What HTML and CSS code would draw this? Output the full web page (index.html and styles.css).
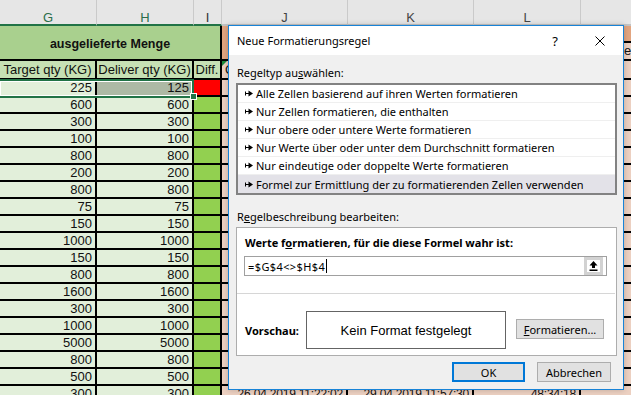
FILE: index.html
```html
<!DOCTYPE html>
<html lang="de">
<head>
    <meta charset="UTF-8">
    <title>Neue Formatierungsregel</title>
    <link rel="stylesheet" href="styles.css">
</head>
<body>
    <div class="sheet">
        <div class="heads">
            <div class="head col-g sel">G</div>
            <div class="head col-h sel">H</div>
            <div class="head col-i sel dark">I</div>
            <div class="head col-j">J</div>
            <div class="head col-k">K</div>
            <div class="head col-l">L</div>
            <div class="head col-m"></div>
        </div>

        <!-- merged group header -->
        <div class="row r1">
            <div class="cell group-head">ausgelieferte Menge</div>
            <div class="cell col-j peach"></div>
            <div class="cell col-k peach"></div>
            <div class="cell col-l peach"></div>
            <div class="split col-m">
                <div class="cell peach"></div>
                <div class="cell pink left">erledigt</div>
            </div>
        </div>

        <div class="row r2">
            <div class="cell col-g sub">Target qty (KG)</div>
            <div class="cell col-h sub">Deliver qty (KG)</div>
            <div class="cell col-i sub">Diff.</div>
            <div class="cell col-j pink left flag">O</div>
            <div class="cell col-k pink"></div>
            <div class="cell col-l pink"></div>
            <div class="cell col-m pink"></div>
        </div>

        <div class="row"><div class="cell col-g active">225</div><div class="cell col-h picked">125</div><div class="cell col-i bad"></div><div class="cell col-j"></div><div class="cell col-k"></div><div class="cell col-l"></div><div class="cell col-m"></div></div>
        <div class="row"><div class="cell col-g">600</div><div class="cell col-h">600</div><div class="cell col-i ok"></div><div class="cell col-j"></div><div class="cell col-k"></div><div class="cell col-l"></div><div class="cell col-m"></div></div>
        <div class="row"><div class="cell col-g">300</div><div class="cell col-h">300</div><div class="cell col-i ok"></div><div class="cell col-j"></div><div class="cell col-k"></div><div class="cell col-l"></div><div class="cell col-m"></div></div>
        <div class="row"><div class="cell col-g">100</div><div class="cell col-h">100</div><div class="cell col-i ok"></div><div class="cell col-j"></div><div class="cell col-k"></div><div class="cell col-l"></div><div class="cell col-m"></div></div>
        <div class="row"><div class="cell col-g">800</div><div class="cell col-h">800</div><div class="cell col-i ok"></div><div class="cell col-j"></div><div class="cell col-k"></div><div class="cell col-l"></div><div class="cell col-m"></div></div>
        <div class="row"><div class="cell col-g">200</div><div class="cell col-h">200</div><div class="cell col-i ok"></div><div class="cell col-j"></div><div class="cell col-k"></div><div class="cell col-l"></div><div class="cell col-m"></div></div>
        <div class="row"><div class="cell col-g">800</div><div class="cell col-h">800</div><div class="cell col-i ok"></div><div class="cell col-j"></div><div class="cell col-k"></div><div class="cell col-l"></div><div class="cell col-m"></div></div>
        <div class="row"><div class="cell col-g">75</div><div class="cell col-h">75</div><div class="cell col-i ok"></div><div class="cell col-j"></div><div class="cell col-k"></div><div class="cell col-l"></div><div class="cell col-m"></div></div>
        <div class="row"><div class="cell col-g">150</div><div class="cell col-h">150</div><div class="cell col-i ok"></div><div class="cell col-j"></div><div class="cell col-k"></div><div class="cell col-l"></div><div class="cell col-m"></div></div>
        <div class="row"><div class="cell col-g">1000</div><div class="cell col-h">1000</div><div class="cell col-i ok"></div><div class="cell col-j"></div><div class="cell col-k"></div><div class="cell col-l"></div><div class="cell col-m"></div></div>
        <div class="row"><div class="cell col-g">150</div><div class="cell col-h">150</div><div class="cell col-i ok"></div><div class="cell col-j"></div><div class="cell col-k"></div><div class="cell col-l"></div><div class="cell col-m"></div></div>
        <div class="row"><div class="cell col-g">800</div><div class="cell col-h">800</div><div class="cell col-i ok"></div><div class="cell col-j"></div><div class="cell col-k"></div><div class="cell col-l"></div><div class="cell col-m"></div></div>
        <div class="row"><div class="cell col-g">1600</div><div class="cell col-h">1600</div><div class="cell col-i ok"></div><div class="cell col-j"></div><div class="cell col-k"></div><div class="cell col-l"></div><div class="cell col-m"></div></div>
        <div class="row"><div class="cell col-g">300</div><div class="cell col-h">300</div><div class="cell col-i ok"></div><div class="cell col-j"></div><div class="cell col-k"></div><div class="cell col-l"></div><div class="cell col-m"></div></div>
        <div class="row"><div class="cell col-g">1000</div><div class="cell col-h">1000</div><div class="cell col-i ok"></div><div class="cell col-j"></div><div class="cell col-k"></div><div class="cell col-l"></div><div class="cell col-m"></div></div>
        <div class="row"><div class="cell col-g">5000</div><div class="cell col-h">5000</div><div class="cell col-i ok"></div><div class="cell col-j"></div><div class="cell col-k"></div><div class="cell col-l"></div><div class="cell col-m"></div></div>
        <div class="row"><div class="cell col-g">800</div><div class="cell col-h">800</div><div class="cell col-i ok"></div><div class="cell col-j"></div><div class="cell col-k"></div><div class="cell col-l"></div><div class="cell col-m"></div></div>
        <div class="row"><div class="cell col-g">500</div><div class="cell col-h">500</div><div class="cell col-i ok"></div><div class="cell col-j"></div><div class="cell col-k"></div><div class="cell col-l"></div><div class="cell col-m"></div></div>
        <div class="row"><div class="cell col-g">300</div><div class="cell col-h">300</div><div class="cell col-i ok"></div><div class="cell col-j date">26.04.2019 11:22:02</div><div class="cell col-k date">29.04.2019 11:57:30</div><div class="cell col-l date">48:34:18</div><div class="cell col-m"></div></div>

        <!-- selected range G4:H4 -->
        <div class="selection"></div>
        <div class="fill-handle"></div>
    </div>

    <div class="dialog">
        <div class="dlg-title">
            <span class="caption">Neue Formatierungsregel</span>
            <span class="dlg-help">?</span>
            <span class="dlg-close">
                <svg width="10" height="10" viewBox="0 0 10 10"><path d="M0.5 0.5 L9.5 9.5 M9.5 0.5 L0.5 9.5" stroke="#000" stroke-width="1" fill="none"/></svg>
            </span>
        </div>
        <div class="dlg-body">
            <div class="dlg-label">Regeltyp au<u>s</u>wählen:</div>
            <ul class="rule-list">
                <li><svg class="pointer" width="8" height="7" viewBox="0 0 8 7"><path d="M0 1.5h1v4H0z M0 3h4v1H0z M3.5 0.5 L8 3.5 L3.5 6.5z" fill="#000"/></svg>Alle Zellen basierend auf ihren Werten formatieren</li>
                <li><svg class="pointer" width="8" height="7" viewBox="0 0 8 7"><path d="M0 1.5h1v4H0z M0 3h4v1H0z M3.5 0.5 L8 3.5 L3.5 6.5z" fill="#000"/></svg>Nur Zellen formatieren, die enthalten</li>
                <li><svg class="pointer" width="8" height="7" viewBox="0 0 8 7"><path d="M0 1.5h1v4H0z M0 3h4v1H0z M3.5 0.5 L8 3.5 L3.5 6.5z" fill="#000"/></svg>Nur obere oder untere Werte formatieren</li>
                <li><svg class="pointer" width="8" height="7" viewBox="0 0 8 7"><path d="M0 1.5h1v4H0z M0 3h4v1H0z M3.5 0.5 L8 3.5 L3.5 6.5z" fill="#000"/></svg>Nur Werte über oder unter dem Durchschnitt formatieren</li>
                <li><svg class="pointer" width="8" height="7" viewBox="0 0 8 7"><path d="M0 1.5h1v4H0z M0 3h4v1H0z M3.5 0.5 L8 3.5 L3.5 6.5z" fill="#000"/></svg>Nur eindeutige oder doppelte Werte formatieren</li>
                <li class="current"><svg class="pointer" width="8" height="7" viewBox="0 0 8 7"><path d="M0 1.5h1v4H0z M0 3h4v1H0z M3.5 0.5 L8 3.5 L3.5 6.5z" fill="#000"/></svg>Formel zur Ermittlung der zu formatierenden Zellen verwenden</li>
            </ul>

            <div class="dlg-label second">R<u>e</u>gelbeschreibung bearbeiten:</div>
            <div class="group">
                <div class="group-title">Werte f<u>o</u>rmatieren, für die diese Formel wahr ist:</div>
                <div class="formula">
                    <span class="formula-text">=$G$4&lt;&gt;$H$4</span><span class="caret"></span>
                    <button class="ref-btn">
                        <svg width="9" height="10" viewBox="0 0 9 10"><path d="M4.5 0 L0.5 4.5 H3 V7 H6 V4.5 H8.5z M0.5 8.5 H8.5 V10 H0.5z" fill="#000"/></svg>
                    </button>
                </div>
                <div class="group-sep"></div>
                <div class="preview-row">
                    <span class="preview-label">Vorschau:</span>
                    <div class="preview">Kein Format festgelegt</div>
                    <button class="btn format-btn"><u>F</u>ormatieren...</button>
                </div>
            </div>

            <div class="dlg-buttons">
                <button class="btn ok">OK</button>
                <button class="btn cancel">Abbrechen</button>
            </div>
        </div>
    </div>
</body>
</html>
```

FILE: styles.css
```css
/* Base */
html, body {
    margin: 0;
    padding: 0;
}

body {
    width: 631px;
    height: 395px;
    overflow: hidden;
    position: relative;
    background: #fff;
}

/* Spreadsheet behind the dialog */
.sheet {
    position: relative;
    font-family: "Liberation Sans", Arial, sans-serif;
    font-size: 13px;
    color: #111;
}

.heads {
    display: flex;
    height: 26px;
    background: #e6e6e6;
}

.head {
    box-sizing: border-box;
    flex-shrink: 0;
    height: 26px;
    padding-top: 11px;
    line-height: 14px;
    text-align: center;
    color: #444;
    border-right: 1px solid #cacaca;
    border-bottom: 2px solid #c4c4c4;
}

.head.sel {
    color: #2b6e4b;
    border-bottom-color: #217346;
}

.head.dark {
    color: #333;
}

.head.col-m {
    border-right: none;
}

.col-g { width: 97px; }
.col-h { width: 97px; }
.col-i { width: 28px; }
.col-j { width: 126px; }
.col-k { width: 126px; }
.col-l { width: 107px; }
.col-m { flex: 1; }

.row {
    display: flex;
    height: 17px;
}

.row.r1 { height: 35px; }
.row.r2 { height: 19px; }

.cell {
    box-sizing: border-box;
    flex-shrink: 0;
    padding: 1px 3px 0;
    line-height: 14px;
    text-align: right;
    white-space: nowrap;
    overflow: hidden;
    border-right: 2px solid #000;
    border-bottom: 2px solid #000;
}

.cell.col-m {
    border-right: none;
}

.row .col-g,
.row .col-h {
    background: #e2efda;
}

.row .col-j,
.row .col-k,
.row .col-l,
.row .col-m {
    background: #ecd0c1;
}

.cell.ok { background: #92d050; }
.cell.bad { background: #ff0000; }
.cell.picked { background: #adb9a5 !important; }

.cell.date {
    font-size: 12px;
    letter-spacing: -0.2px;
}

.cell.left { text-align: left; }

/* merged header row */
.group-head {
    width: 222px;
    display: flex;
    align-items: center;
    justify-content: center;
    padding-top: 3px;
    font-weight: bold;
    font-size: 12.5px;
    background: #a9d08e;
}

.row .peach { background: #e2a580; }
.row .pink { background: #ecd0c1; }

.split {
    display: flex;
    flex-direction: column;
}

.split .cell {
    height: 17px;
    border-right: none;
}

.split .cell + .cell {
    height: 18px;
    padding-left: 43px;
}

.row .sub {
    background: #c6e0b4;
    text-align: center;
    padding: 2px 0 0;
}

.flag {
    position: relative;
    padding-top: 2px;
}

.flag::before {
    content: "";
    position: absolute;
    left: 0;
    top: 0;
    border-top: 5px solid #1a8a3c;
    border-right: 5px solid transparent;
}

.selection {
    position: absolute;
    left: -2px;
    top: 79px;
    width: 196px;
    height: 19px;
    box-sizing: border-box;
    border: 2px solid #217346;
    box-shadow: inset 0 0 0 1px #fff;
}

.fill-handle {
    position: absolute;
    left: 191px;
    top: 94px;
    width: 5px;
    height: 5px;
    background: #217346;
    outline: 1px solid #fff;
}

/* Dialog */
.dialog {
    position: absolute;
    left: 228px;
    top: 25px;
    width: 396px;
    box-sizing: border-box;
    border: 1px solid #1883d7;
    background: #f0f0f0;
    font-family: "Noto Sans", sans-serif;
    font-size: 11px;
    color: #000;
    box-shadow: 0 0 6px rgba(0, 0, 0, 0.2);
}

.dlg-title {
    display: flex;
    align-items: center;
    height: 29px;
    padding-left: 8px;
    background: #fff;
}

.dlg-title .caption {
    flex: 1;
}

.dlg-help {
    width: 44px;
    text-align: center;
    font-size: 13px;
}

.dlg-close {
    width: 46px;
    display: flex;
    justify-content: center;
}

.dlg-body {
    padding: 10px 6px 7px 7px;
}

.dlg-label {
    line-height: 16px;
    padding-left: 1px;
}

.dlg-label.second {
    margin-top: 14px;
}

.rule-list {
    margin: 2px 0 0;
    padding: 0;
    list-style: none;
    background: #fff;
    border: 2px solid #828282;
}

.rule-list li {
    box-sizing: border-box;
    display: flex;
    align-items: center;
    gap: 3px;
    height: 18px;
    padding-left: 7px;
    border-bottom: 1px solid #efefef;
}

.rule-list li:last-child {
    border-bottom: none;
}

.rule-list li.current {
    background: #e3e2e8;
}

.group {
    margin-top: 2px;
    padding: 7px 9px 6px 7px;
    background: #fff;
    border: 1px solid #adadad;
}

.group-title {
    line-height: 16px;
    padding-left: 1px;
    font-weight: bold;
}

.formula {
    display: flex;
    align-items: center;
    height: 20px;
    margin-top: 5px;
    padding-left: 3px;
    box-sizing: border-box;
    border: 1px solid #a0a0a0;
    background: #fff;
}

.formula-text {
    letter-spacing: 0.4px;
}

.caret {
    width: 1px;
    height: 14px;
    margin-left: 1px;
    background: #000;
}

.ref-btn {
    display: flex;
    align-items: center;
    justify-content: center;
    width: 19px;
    height: 18px;
    margin-left: auto;
    margin-right: 3px;
    padding: 0;
    box-sizing: border-box;
    background: #fff;
    border: 3px solid #d2d2d2;
}

.group-sep {
    margin: 17px -8px 0 -7px;
    border-top: 1px solid #d6d6d6;
}

.preview-row {
    display: flex;
    align-items: center;
    margin-top: 17px;
}

.preview-label {
    width: 61px;
    padding-left: 1px;
    font-weight: bold;
}

.preview {
    width: 200px;
    height: 38px;
    box-sizing: border-box;
    display: flex;
    align-items: center;
    justify-content: center;
    border: 1px solid #646464;
    font-family: "Liberation Sans", Arial, sans-serif;
    font-size: 13px;
}

.btn {
    height: 20px;
    padding: 0;
    box-sizing: border-box;
    font-family: "Noto Sans", sans-serif;
    font-size: 11px;
    color: #000;
    background: #e1e1e1;
    border: 1px solid #adadad;
}

.format-btn {
    width: 88px;
    margin-left: 10px;
    margin-top: -2px;
}

.dlg-buttons {
    display: flex;
    justify-content: flex-end;
    gap: 12px;
    margin-top: 6px;
    padding-right: 6px;
}

.btn.ok {
    width: 73px;
    border: 2px solid #0078d7;
}

.btn.cancel {
    width: 74px;
}
```
